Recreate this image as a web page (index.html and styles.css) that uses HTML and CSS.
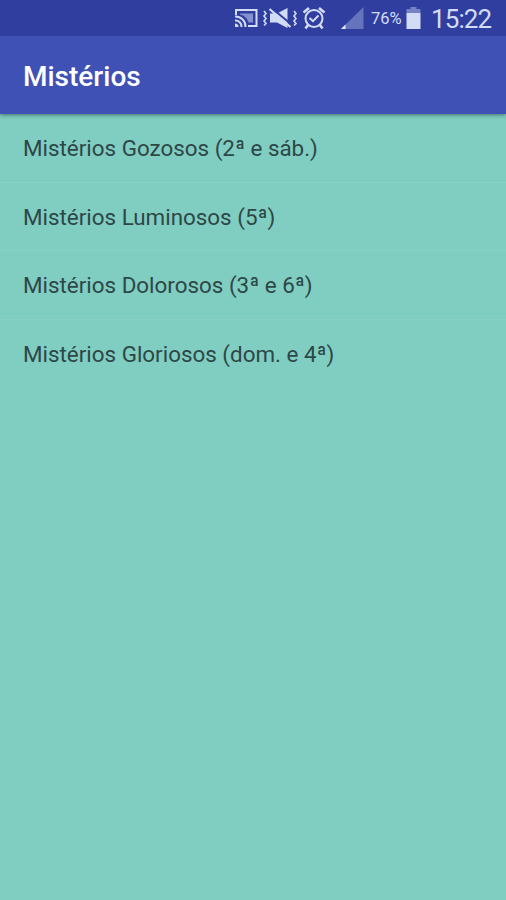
FILE: index.html
```
<!DOCTYPE html>
<html lang="pt-br">
<head>
  <meta charset="UTF-8">
  <meta name="viewport" content="width=device-width, initial-scale=1.0">
  <title>Mistérios</title>
  <link rel="stylesheet" href="styles.css">
</head>
<body>
  <!-- Barra de status -->
  <div class="status-bar">
    <svg class="icon-cast" width="24" height="20" viewBox="0 0 24 20" fill="none" stroke="#d3dcf5" stroke-width="2">
      <path d="M2 7V2H22.5V18H14"/>
      <path d="M1 8.5A10 10 0 0 1 11.5 19M1 12.5A6 6 0 0 1 7.5 19"/>
      <path d="M1 15.5A3.5 3.5 0 0 1 4.5 19H1Z" fill="#d3dcf5" stroke="none"/>
      <path d="M6 5.5H19V14.5H14.5C13.5 10.5 10.5 7.5 6 6.5Z" fill="#8590cd" stroke="none"/>
    </svg>
    <svg class="icon-mute" width="34" height="22" viewBox="0 0 34 22" fill="none" stroke="#d3dcf5">
      <path d="M1 4L3 6.5L1 9L3 11.5L1 14L3 16.5L1 18.5M31 4L33 6.5L31 9L33 11.5L31 14L33 16.5L31 18.5" stroke-width="1.6"/>
      <path d="M7 6.5H14L24.5 1V21L14 15.5H7Z" fill="#d3dcf5" stroke="none"/>
      <path d="M8 0.5L29 18" stroke="#303f9f" stroke-width="2"/>
      <path d="M6.5 2L27.5 20" stroke-width="2.2"/>
    </svg>
    <svg class="icon-alarm" width="24" height="24" viewBox="0 0 24 24" fill="none" stroke="#d3dcf5" stroke-width="2">
      <circle cx="12" cy="12.5" r="8.5"/>
      <path d="M1.5 6.5L7 2M22.5 6.5L17 2M6 19L3.5 22.5M18 19L20.5 22.5" stroke-width="2.6"/>
      <path d="M7.5 12L11 15.2L16.5 9.5"/>
    </svg>
    <svg class="icon-signal" width="23" height="23" viewBox="0 0 23 23">
      <path d="M22.5 0V22H0Z" fill="#6673bd"/>
      <path d="M4.5 17.5V22H0Z" fill="#e3e9fb"/>
    </svg>
    <span class="percent">76%</span>
    <svg class="icon-battery" width="15" height="22" viewBox="0 0 15 22">
      <path d="M4.5 0H10.5V2H14.5V6H0.5V2H4.5Z" fill="#7582c6"/>
      <path d="M0.5 6H14.5V22H0.5Z" fill="#d3dcf5"/>
    </svg>
    <span class="clock">15:22</span>
  </div>

  <!-- Cabeçalho -->
  <header class="toolbar">
    <h1>Mistérios</h1>
  </header>

  <!-- Lista -->
  <ul class="list">
    <li><span>Mistérios Gozosos (2ª e sáb.)</span></li>
    <li><span>Mistérios Luminosos (5ª)</span></li>
    <li><span>Mistérios Dolorosos (3ª e 6ª)</span></li>
    <li><span>Mistérios Gloriosos (dom. e 4ª)</span></li>
  </ul>
</body>
</html>
```

FILE: styles.css
```
body {
  margin: 0;
  min-height: 100vh;
  background-color: #80cdc1;
  font-family: Roboto, sans-serif;
}

.status-bar {
  position: relative;
  z-index: 1;
  display: flex;
  align-items: center;
  justify-content: flex-end;
  box-sizing: border-box;
  height: 36px;
  padding-right: 14px;
  background-color: #303f9f;
  color: #d3dcf5;
}

.status-bar svg {
  flex: none;
}

.icon-mute {
  margin-left: 5px;
}

.icon-alarm {
  margin-left: 5px;
}

.icon-signal {
  margin-left: 15px;
}

.percent {
  width: 31px;
  margin-left: 7px;
  font-size: 16.5px;
  white-space: nowrap;
}

.icon-battery {
  margin-left: 4px;
}

.clock {
  width: 61px;
  margin-left: 10px;
  padding-top: 2px;
  font-size: 26px;
  line-height: 34px;
  letter-spacing: -0.9px;
  white-space: nowrap;
}

.toolbar {
  position: relative;
  display: flex;
  align-items: center;
  box-sizing: border-box;
  height: 78px;
  padding: 3px 23px 0;
  background-color: #3f51b5;
  box-shadow: 0 1px 4px rgba(0, 0, 0, 0.45);
}

.toolbar h1 {
  margin: 0;
  color: #fff;
  font-size: 28px;
  font-weight: 500;
}

.list {
  margin: 0;
  padding: 0;
  list-style: none;
}

.list li {
  display: flex;
  align-items: center;
  box-sizing: border-box;
  height: 68.5px;
  padding: 1px 23px 0;
  border-bottom: 1px solid #8ad2c7;
  color: #2e4747;
  font-size: 22.4px;
}

.list li:last-child {
  border-bottom-color: transparent;
}
```
